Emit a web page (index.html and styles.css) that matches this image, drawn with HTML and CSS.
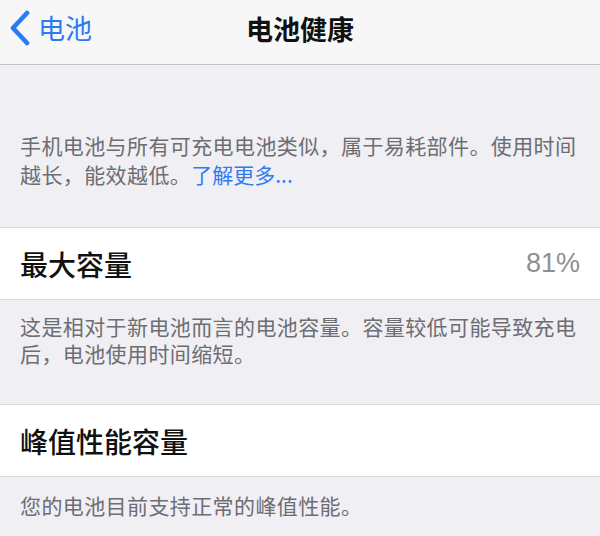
FILE: index.html
```html
<!DOCTYPE html>
<html lang="zh-CN">
<head>
<meta charset="utf-8">
<link rel="stylesheet" href="styles.css">
</head>
<body>
<header class="nav">
  <div class="back">
    <svg class="chev" width="24" height="36" viewBox="0 0 24 36"><path d="M19 3 L5 18 L19 33" fill="none" stroke="#2a7af2" stroke-width="4.6" stroke-linecap="round" stroke-linejoin="round"/></svg>
    <span class="back-label">电池</span>
  </div>
  <div class="title">电池健康</div>
</header>
<main>
  <p class="note note-first">手机电池与所有可充电电池类似，属于易耗部件。使用时间越长，能效越低。<span class="link">了解更多...</span></p>
  <div class="row"><span class="label">最大容量</span><span class="value">81%</span></div>
  <p class="note note-mid">这是相对于新电池而言的电池容量。容量较低可能导致充电后，电池使用时间缩短。</p>
  <div class="row"><span class="label">峰值性能容量</span></div>
  <p class="note note-last">您的电池目前支持正常的峰值性能。</p>
</main>
</body>
</html>
```
FILE: styles.css
```css
* { box-sizing: border-box; }
html, body { margin: 0; padding: 0; }
body {
  width: 600px;
  height: 536px;
  overflow: hidden;
  background: #efeff4;
  font-family: "Noto Sans CJK SC", "Noto Sans", sans-serif;
}
.nav {
  height: 65px;
  background: #f7f7f8;
  border-bottom: 1px solid #c4c4c8;
  display: flex;
  align-items: center;
  justify-content: center;
  position: relative;
}
.back {
  position: absolute;
  left: 8px;
  top: 10px;
  display: flex;
  align-items: center;
  gap: 6px;
  color: #2a7af2;
}
.back-label {
  font-size: 27px;
  line-height: 36px;
}
.title {
  font-size: 27px;
  font-weight: 700;
  color: #111;
  margin-top: -8px;
}
.note {
  margin: 0;
  padding: 0 20px;
  font-size: 21px;
  color: #6d6d72;
  letter-spacing: 0.4px;
}
.note-first { padding-top: 66px; padding-bottom: 38px; line-height: 29px; }
.note-mid { padding-top: 13px; padding-bottom: 37px; line-height: 27px; }
.note-last { padding-top: 15px; line-height: 27px; }
.link { color: #2f7bf3; letter-spacing: 0; }
.row {
  height: 73px;
  background: #fff;
  border-top: 1px solid #dcdce0;
  border-bottom: 1px solid #dcdce0;
  display: flex;
  align-items: center;
  justify-content: space-between;
  padding: 0 20px;
}
.label {
  font-size: 28px;
  font-weight: 500;
  color: #111;
}
.value {
  font-size: 27px;
  color: #8e8e93;
  font-family: "Liberation Sans", "Noto Sans", sans-serif;
}
```
